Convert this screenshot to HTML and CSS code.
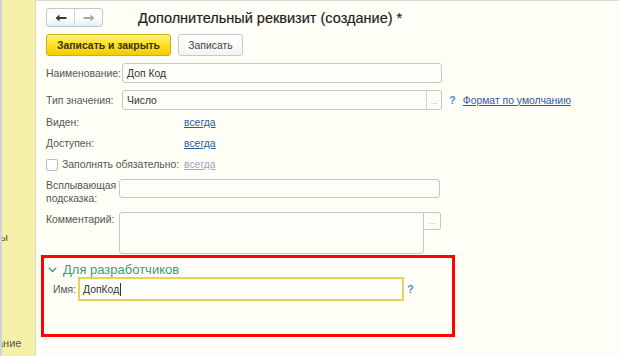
FILE: index.html
```html
<!DOCTYPE html>
<html lang="ru">
<head>
<meta charset="utf-8">
<title>Дополнительный реквизит (создание)</title>
<link rel="stylesheet" href="styles.css">
</head>
<body>
<div class="app">
  <aside class="sidebar">
    <div class="side-item side-top">ы</div>
    <div class="side-item side-bottom">ание</div>
  </aside>
  <main class="main">
    <div class="content">
      <div class="header">
        <div class="nav">
          <button class="nav-btn" type="button" aria-label="Назад">
            <svg width="12" height="8" viewBox="0 0 12 8"><path d="M0.5 4 L4.5 0.5 L4.5 3 L11.5 3 L11.5 5 L4.5 5 L4.5 7.5 Z" fill="#3a3a3a"/></svg>
          </button>
          <button class="nav-btn" type="button" aria-label="Вперёд">
            <svg width="12" height="8" viewBox="0 0 12 8"><path d="M11.5 4 L7.5 0.5 L7.5 3 L0.5 3 L0.5 5 L7.5 5 L7.5 7.5 Z" fill="#a8a8a8"/></svg>
          </button>
        </div>
        <h1 class="title">Дополнительный реквизит (создание) *</h1>
      </div>

      <div class="toolbar">
        <button class="btn btn-primary" type="button">Записать и закрыть</button>
        <button class="btn" type="button">Записать</button>
      </div>

      <div class="row row-name">
        <span class="label w76">Наименование:</span>
        <div class="field w320"><span class="field-text">Доп Код</span></div>
      </div>

      <div class="row row-type">
        <span class="label w76">Тип значения:</span>
        <div class="field w320 with-btn"><span class="field-text">Число</span><span class="dots">...</span></div>
        <span class="help">?</span>
        <a class="link fmt" href="#">Формат по умолчанию</a>
      </div>

      <div class="row row-plain row-first">
        <span class="label w138">Виден:</span>
        <a class="link" href="#">всегда</a>
      </div>

      <div class="row row-plain">
        <span class="label w138">Доступен:</span>
        <a class="link" href="#">всегда</a>
      </div>

      <div class="row row-plain">
        <span class="checkbox"></span>
        <span class="label w122">Заполнять обязательно:</span>
        <a class="link disabled" href="#">всегда</a>
      </div>

      <div class="row row-tip">
        <span class="label w73 two-line">Всплывающая подсказка:</span>
        <div class="field w321"></div>
      </div>

      <div class="row row-comment">
        <span class="label w73">Комментарий:</span>
        <div class="textarea"></div>
        <span class="dots dots-box">...</span>
      </div>

      <section class="dev-group">
        <div class="group-title">
          <svg width="9" height="6" viewBox="0 0 9 6"><path d="M0.8 0.8 L4.5 4.5 L8.2 0.8" fill="none" stroke="#3f9a78" stroke-width="1.3"/></svg>
          <span>Для разработчиков</span>
        </div>
        <div class="row row-id">
          <span class="label id-label">Имя:</span>
          <div class="field focused"><span class="field-text">ДопКод</span><span class="caret"></span></div>
          <span class="help">?</span>
        </div>
      </section>
    </div>
  </main>
</div>
</body>
</html>
```
FILE: styles.css
```css
* { box-sizing: border-box; }

html, body {
  margin: 0;
  padding: 0;
  width: 619px;
  height: 356px;
  overflow: hidden;
  background: #fefef6;
  font-family: "Liberation Sans", Arial, sans-serif;
  font-size: 10.4px;
  color: #4a4a4a;
}

.app {
  display: flex;
  height: 356px;
}

.sidebar {
  width: 36px;
  flex: none;
  background: #f5f0a8;
  border-left: 2px solid #cfd3d6;
  border-right: 1px solid #dcdccc;
  display: flex;
  flex-direction: column;
  overflow: hidden;
  font-size: 11px;
  color: #555;
}

.side-item {
  white-space: nowrap;
}

.side-top {
  margin-top: 231px;
  margin-left: -2px;
}

.side-bottom {
  margin-top: 94px;
  margin-left: -5px;
}

.main {
  flex: 1;
  border-top: 1px solid #dcdcd4;
  min-width: 0;
}

.content {
  padding: 7px 0 0 10px;
  display: flex;
  flex-direction: column;
}

.header {
  display: flex;
  align-items: center;
  height: 19px;
}

.nav {
  display: flex;
  width: 57px;
  height: 19px;
  border: 1px solid #c4c8cc;
  border-radius: 3px;
  overflow: hidden;
  background: linear-gradient(#ffffff, #ffffff 50%, #e3eef8);
}

.nav-btn {
  flex: 1;
  border: 0;
  padding: 0;
  margin: 0;
  background: transparent;
  display: flex;
  align-items: center;
  justify-content: center;
}

.nav-btn + .nav-btn {
  border-left: 1px solid #d4d8dc;
}

.title {
  margin: 0 0 0 35px;
  font-size: 14.5px;
  font-weight: normal;
  color: #1e1e1e;
  -webkit-text-stroke: 0.2px #1e1e1e;
  white-space: nowrap;
}

.toolbar {
  display: flex;
  gap: 7px;
  margin-top: 7px;
  height: 22px;
}

.btn {
  font-family: inherit;
  font-size: 10.4px;
  color: #444;
  height: 22px;
  padding: 0;
  width: 65px;
  border: 1px solid #c8c8c8;
  border-radius: 3px;
  background: linear-gradient(#ffffff, #f3f3f0);
}

.btn-primary {
  width: 125px;
  font-weight: bold;
  color: #3a3000;
  border-color: #cfae0e;
  background: linear-gradient(#fff07a, #fce22c 45%, #f3cc00);
}

.row {
  display: flex;
  align-items: center;
}

.row-name { margin-top: 7px; height: 20px; }
.row-type { margin-top: 7px; height: 20px; }
.row-plain { height: 21px; }
.row-first { margin-top: 2px; }
.row-tip { margin-top: 4px; height: 28px; align-items: flex-start; }
.row-comment { margin-top: 5px; height: 43px; align-items: flex-start; }

.label {
  flex: none;
  white-space: nowrap;
  color: #555;
}

.w76 { width: 76px; }
.w73 { width: 73px; }
.w138 { width: 138px; }
.w122 { width: 122px; }

.two-line {
  white-space: normal;
  line-height: 13px;
}

.row-comment .label { margin-top: 2px; }

.field {
  height: 20px;
  border: 1px solid #c6c6c0;
  border-radius: 3px;
  background: #fefef8;
  display: flex;
  align-items: center;
  padding-left: 4px;
  color: #333;
  font-size: 10.4px;
}

.w320 { width: 320px; }
.w321 { width: 321px; height: 19px; }

.field-text { flex: 1; }

.with-btn { padding-right: 0; }

.dots {
  width: 15px;
  align-self: stretch;
  border-left: 1px solid #d4d4ce;
  color: #9a9a9a;
  font-size: 8px;
  display: flex;
  align-items: flex-end;
  justify-content: center;
  padding-bottom: 3px;
}

.textarea {
  width: 305px;
  height: 42px;
  border: 1px solid #c6c6c0;
  border-radius: 3px 0 3px 3px;
  background: #fefef8;
}

.dots-box {
  width: 17px;
  height: 18px;
  border: 1px solid #c6c6c0;
  border-left: 0;
  border-radius: 0 3px 3px 0;
  align-self: flex-start;
}

.help {
  color: #4d8fc9;
  font-weight: bold;
  font-size: 11px;
  margin-left: 7px;
}

.link {
  color: #2d5f9c;
  text-decoration: underline;
}

.fmt { margin-left: 7px; }

.link.disabled { color: #9aa6c4; }

.checkbox {
  width: 12px;
  height: 12px;
  border: 1px solid #bdbdb6;
  border-radius: 2px;
  background: #fff;
  margin-right: 4px;
  flex: none;
}

.dev-group {
  margin: 0 0 0 -5px;
  width: 414px;
  height: 82px;
  border: 3px solid #ff0000;
  padding: 4px 0 0 4px;
  display: flex;
  flex-direction: column;
}

.group-title {
  display: flex;
  align-items: center;
  gap: 6px;
  color: #3f9a78;
  font-size: 13px;
  height: 14px;
}

.group-title svg { margin-top: 1px; }

.row-id {
  margin-top: 1px;
  height: 24px;
}

.id-label {
  width: 25px;
  margin-left: 5px;
}

.field.focused {
  width: 326px;
  height: 24px;
  border: 2px solid #ead25a;
  border-radius: 0;
  padding-left: 3px;
  color: #333;
}

.field.focused .field-text { flex: none; }

.caret {
  width: 1px;
  height: 13px;
  background: #333;
  margin-left: 1px;
}

.row-id .help { margin-left: 3px; }
```
